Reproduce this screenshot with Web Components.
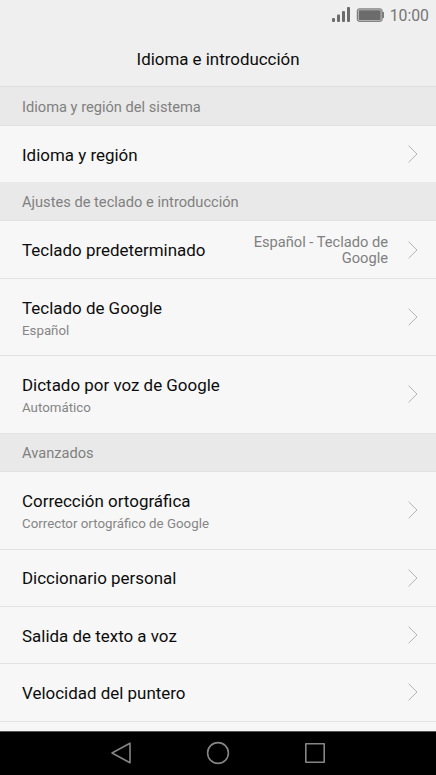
<!DOCTYPE html>
<html lang="es">
<head>
<meta charset="utf-8">
<title>Idioma e introducción</title>
<style>
body {
  margin: 0;
  background: #f7f7f7;
  font-family: Roboto, "Liberation Sans", sans-serif;
}
</style>
</head>
<body>
<phone-screen>
  <status-bar slot="top" hora="10:00"></status-bar>
  <title-bar slot="top">Idioma e introducción</title-bar>

  <list-section style="--alto: 39px; --baja: 2px">Idioma y región del sistema</list-section>
  <list-item style="--alto: 56px; --baja: 3px; --sube: 0px; --linea: transparent">Idioma y región</list-item>

  <list-section style="--alto: 39px; --baja: 2px">Ajustes de teclado e introducción</list-section>
  <list-item style="--alto: 58px; --sube: 0px">Teclado predeterminado<span slot="valor">Español - Teclado de Google</span></list-item>
  <list-item style="--alto: 77px; --baja: 4px">Teclado de Google<span slot="detalle">Español</span></list-item>
  <list-item style="--alto: 78px; --baja: 3px">Dictado por voz de Google<span slot="detalle">Automático</span></list-item>

  <list-section style="--alto: 38px">Avanzados</list-section>
  <list-item style="--alto: 78px; --baja: 3px">Corrección ortográfica<span slot="detalle">Corrector ortográfico de Google</span></list-item>
  <list-item style="--alto: 57px; --baja: 0px">Diccionario personal</list-item>
  <list-item style="--alto: 57px">Salida de texto a voz</list-item>
  <list-item style="--alto: 58px">Velocidad del puntero</list-item>

  <nav-bar slot="bottom"></nav-bar>
</phone-screen>

<script>
class PhoneScreen extends HTMLElement {
  constructor() {
    super();
    this.attachShadow({ mode: 'open' }).innerHTML = `
    <style>
    :host {
      display: flex;
      flex-direction: column;
      width: 436px;
      height: 775px;
      overflow: hidden;
      background: #f7f7f7;
    }
    main {
      flex: 1;
      min-height: 0;
      overflow: hidden;
    }
    </style>
    <slot name="top"></slot>
    <main><slot></slot></main>
    <slot name="bottom"></slot>`;
  }
}
customElements.define('phone-screen', PhoneScreen);

class StatusBar extends HTMLElement {
  constructor() {
    super();
    this.attachShadow({ mode: 'open' });
  }
  connectedCallback() {
    this.shadowRoot.innerHTML = `
    <style>
    :host {
      display: flex;
      flex: none;
      justify-content: flex-end;
      align-items: center;
      box-sizing: border-box;
      height: 30px;
      padding-right: 7px;
      background: #efefef;
      color: #757575;
      font-size: 15.8px;
      line-height: 30px;
    }
    svg { display: block; margin-right: 6px; }
    span { padding-top: 1px; }
    </style>
    <svg width="52" height="16" viewBox="0 0 52 16" fill="#6c6c6c">
      <rect x="0" y="11" width="3" height="4" rx="1"/>
      <rect x="5" y="7.5" width="3" height="7.5" rx="1"/>
      <rect x="10" y="4" width="3" height="11" rx="1"/>
      <rect x="15" y="0" width="3" height="15" rx="1"/>
      <rect x="25.3" y="1.9" width="24.8" height="12.4" rx="1.8" fill="#c4c4c4" stroke="#6c6c6c"/>
      <rect x="26.8" y="3.2" width="21.8" height="9.8" rx=".6"/>
      <path d="M50.4 5h1.5v6h-1.5z"/>
    </svg>
    <span>${this.getAttribute('hora')}</span>`;
  }
}
customElements.define('status-bar', StatusBar);

class TitleBar extends HTMLElement {
  constructor() {
    super();
    this.attachShadow({ mode: 'open' }).innerHTML = `
    <style>
    :host {
      display: block;
      flex: none;
      box-sizing: border-box;
      height: 57px;
      border-bottom: 1px solid #dedede;
      background: #efefef;
      color: #0c0c0c;
      font-size: 16.9px;
      line-height: 58px;
      text-align: center;
    }
    </style>
    <slot></slot>`;
  }
}
customElements.define('title-bar', TitleBar);

class ListSection extends HTMLElement {
  constructor() {
    super();
    this.attachShadow({ mode: 'open' }).innerHTML = `
    <style>
    :host {
      display: flex;
      align-items: center;
      box-sizing: border-box;
      height: var(--alto);
      padding: var(--baja, 1px) 22px 0;
      border-bottom: 1px solid #e2e2e2;
      background: #e9e9e9;
      color: #808080;
      font-size: 14.65px;
    }
    </style>
    <slot></slot>`;
  }
}
customElements.define('list-section', ListSection);

class ListItem extends HTMLElement {
  constructor() {
    super();
    this.attachShadow({ mode: 'open' }).innerHTML = `
    <style>
    :host {
      display: flex;
      align-items: center;
      box-sizing: border-box;
      height: var(--alto);
      padding: 0 17px 0 22px;
      border-bottom: 1px solid var(--linea, #e3e3e3);
      color: #0c0c0c;
      font-size: 16.95px;
      line-height: 20px;
    }
    .texto {
      display: flex;
      flex-direction: column;
      flex: 1;
      gap: 4px;
      padding-top: var(--baja, 1px);
      white-space: nowrap;
    }
    ::slotted([slot=detalle]) {
      color: #858585;
      font-size: 13.3px;
      line-height: 18px;
    }
    ::slotted([slot=valor]) {
      width: 145px;
      margin-right: 19px;
      padding-top: 1px;
      color: #808080;
      font-size: 14.65px;
      line-height: 16px;
      text-align: right;
    }
    svg { display: block; flex: none; margin-bottom: var(--sube, 1px); }
    </style>
    <div class="texto"><div><slot></slot></div><slot name="detalle"></slot></div>
    <slot name="valor"></slot>
    <svg width="12" height="20" viewBox="0 0 12 20" fill="none" stroke="#b4b4b4">
      <path d="M1.6 1.7 10 10 1.6 18.3"/>
    </svg>`;
  }
}
customElements.define('list-item', ListItem);

class NavBar extends HTMLElement {
  constructor() {
    super();
    this.attachShadow({ mode: 'open' }).innerHTML = `
    <style>
    :host {
      display: flex;
      flex: none;
      justify-content: center;
      align-items: center;
      gap: 73px;
      box-sizing: border-box;
      height: 44px;
      padding-bottom: 1px;
      border-top: 1px solid #555;
      background: #000;
    }
    svg { display: block; }
    </style>
    <svg width="24" height="24" viewBox="0 0 24 24" fill="none" stroke="#858585" stroke-width="1.6" stroke-linejoin="round"><path d="M3 12 21 2.2V21.8Z"/></svg>
    <svg width="24" height="24" viewBox="0 0 24 24" fill="none" stroke="#858585" stroke-width="1.6"><circle cx="12" cy="12" r="10.4"/></svg>
    <svg width="24" height="24" viewBox="0 0 24 24" fill="none" stroke="#858585" stroke-width="1.6" stroke-linejoin="round"><path d="M2.8 2.8H21.2V21.2H2.8Z"/></svg>`;
  }
}
customElements.define('nav-bar', NavBar);
</script>
</body>
</html>
